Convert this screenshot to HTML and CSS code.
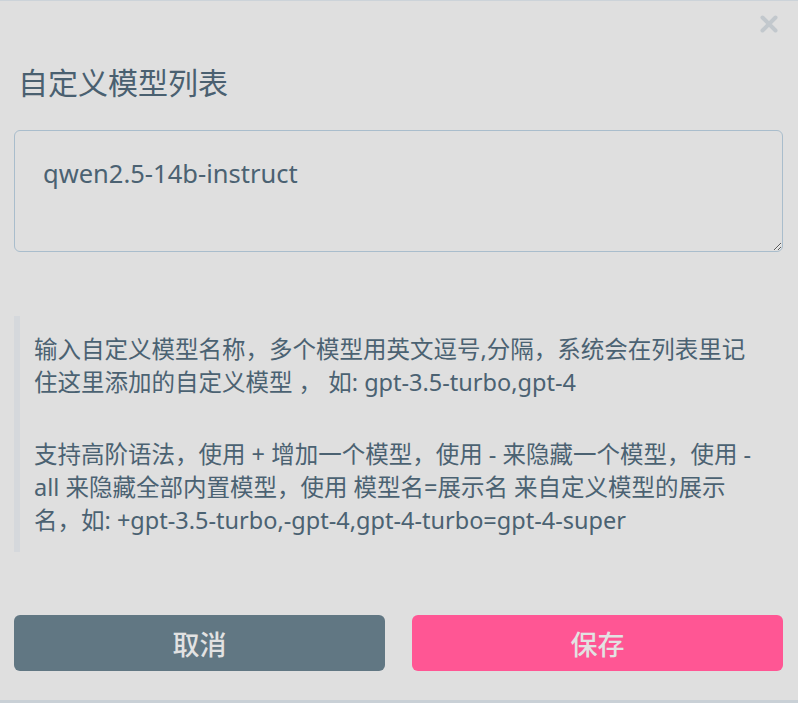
FILE: index.html
```html
<!DOCTYPE html>
<html lang="zh-CN">
<head>
    <meta charset="UTF-8">
    <title>自定义模型列表</title>
    <link rel="stylesheet" href="styles.css">
</head>
<body>
<div class="dialog">
    <div class="dialog-top">
        <button class="close-btn" type="button" aria-label="关闭">
            <svg width="20" height="20" viewBox="0 0 20 20">
                <path d="M3.5 3.5 L16.5 16.5 M16.5 3.5 L3.5 16.5" stroke="#c2c8cd" stroke-width="4" stroke-linecap="round"/>
            </svg>
        </button>
    </div>
    <h2 class="title">自定义模型列表</h2>
    <textarea class="model-input">qwen2.5-14b-instruct</textarea>
    <blockquote class="hint">
        <p>输入自定义模型名称，多个模型用英文逗号,分隔，系统会在列表里记住这里添加的自定义模型 ， 如: gpt-3.5-turbo,gpt-4</p>
        <p>支持高阶语法，使用 + 增加一个模型，使用 - 来隐藏一个模型，使用 -all 来隐藏全部内置模型，使用 模型名=展示名 来自定义模型的展示名，如: +gpt-3.5-turbo,-gpt-4,gpt-4-turbo=gpt-4-super</p>
    </blockquote>
    <div class="actions">
        <button class="btn btn-cancel" type="button">取消</button>
        <button class="btn btn-save" type="button">保存</button>
    </div>
</div>
</body>
</html>
```

FILE: styles.css
```css
html, body {
    margin: 0;
    padding: 0;
    background-color: #dfdfdf;
}

body {
    font-family: "Noto Sans", "Noto Sans CJK SC", sans-serif;
    color: #4b6272;
}

.dialog {
    box-sizing: border-box;
    height: 703px;
    padding: 0 15px 0 14px;
    border-top: 1px solid #ccd3d9;
    border-bottom: 3px solid #c9d0d6;
    display: flex;
    flex-direction: column;
}

.dialog-top {
    display: flex;
    justify-content: flex-end;
    height: 46px;
    align-items: center;
}

.close-btn {
    border: none;
    background: none;
    padding: 0;
    margin-right: 4px;
    width: 20px;
    height: 20px;
    display: flex;
    align-items: center;
    justify-content: center;
}

.title {
    margin: 12px 0 0 4px;
    font-size: 30px;
    font-weight: normal;
    line-height: 48px;
    color: #4a6070;
}

.model-input {
    box-sizing: border-box;
    margin-top: 23px;
    width: 100%;
    height: 122px;
    padding: 25px 28px;
    border: 1px solid #a9bdcc;
    border-radius: 6px;
    background-color: #dfdfdf;
    font-family: "Noto Sans", "Noto Sans CJK SC", sans-serif;
    font-size: 25.5px;
    line-height: 34px;
    color: #4b6272;
    resize: vertical;
    outline: none;
}

.hint {
    margin: 64px 0 0 0;
    padding: 17px 18px 15px 14px;
    border-left: 6px solid #d5d8dc;
    font-size: 23.5px;
    line-height: 33px;
}

.hint p {
    margin: 0;
}

.hint p + p {
    margin-top: 39px;
}

.actions {
    display: flex;
    gap: 27px;
    margin-top: 63px;
}

.btn {
    flex: 1;
    height: 56px;
    border: none;
    border-radius: 6px;
    font-family: "Noto Sans CJK SC", sans-serif;
    font-size: 27px;
    font-weight: 500;
    color: #e2e2e2;
}

.btn-cancel {
    background-color: #617783;
}

.btn-save {
    background-color: #ff5694;
}
```
